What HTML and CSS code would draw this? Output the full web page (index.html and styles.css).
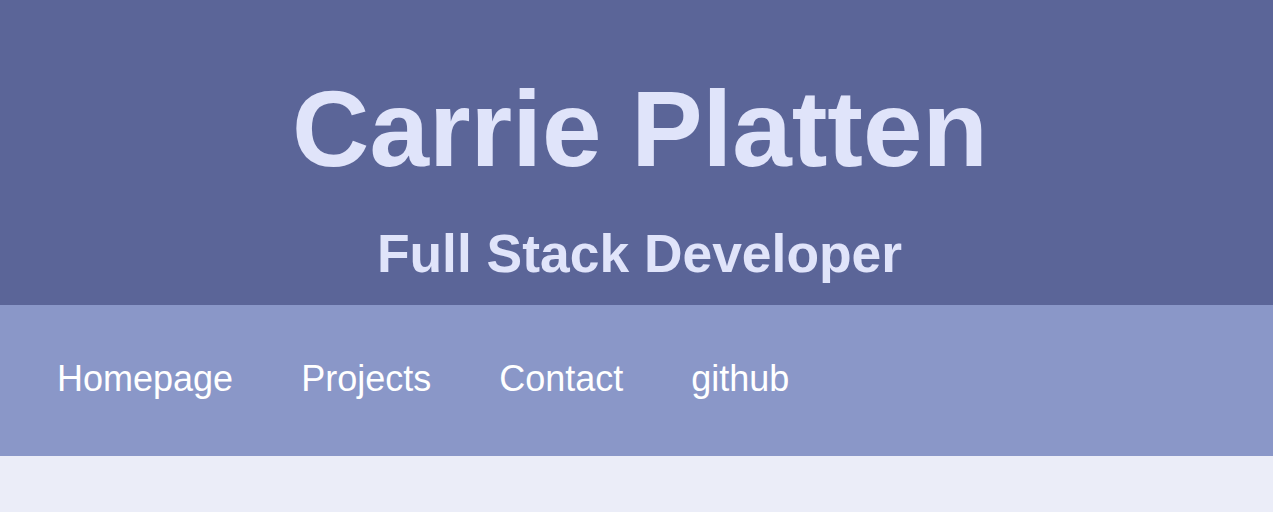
FILE: index.html
```html
<!DOCTYPE html>
<html lang="en">
<head>
<meta charset="utf-8">
<title>Carrie Platten</title>
<link rel="stylesheet" href="styles.css">
</head>
<body>
<header class="hero">
  <h1 class="hero-title">Carrie Platten</h1>
  <h2 class="hero-subtitle">Full Stack Developer</h2>
</header>
<nav class="nav">
  <a class="nav-link" href="#">Homepage</a>
  <a class="nav-link" href="#">Projects</a>
  <a class="nav-link" href="#">Contact</a>
  <a class="nav-link" href="#">github</a>
</nav>
</body>
</html>
```
FILE: styles.css
```css
html, body {
  margin: 0;
  padding: 0;
}
body {
  background: #ebedf8;
  font-family: "Liberation Sans", Arial, sans-serif;
  min-height: 512px;
}
.hero {
  background: #5b6598;
  color: #e0e4fa;
  display: flex;
  flex-direction: column;
  align-items: center;
  padding: 76px 0 0;
  height: 305px;
  box-sizing: border-box;
}
.hero-title {
  margin: 0;
  font-size: 107px;
  line-height: 1;
  font-weight: 700;
  padding-left: 7px;
}
.hero-subtitle {
  margin: 44px 0 0;
  font-size: 53.4px;
  line-height: 1;
  font-weight: 700;
  padding-left: 6px;
}
.nav {
  background: #8a97c8;
  height: 151px;
  box-sizing: border-box;
  display: flex;
  align-items: center;
  gap: 68px;
  padding: 0 0 3px 57px;
}
.nav-link {
  color: #ffffff;
  text-decoration: none;
  font-size: 36px;
  line-height: 1;
}
```
